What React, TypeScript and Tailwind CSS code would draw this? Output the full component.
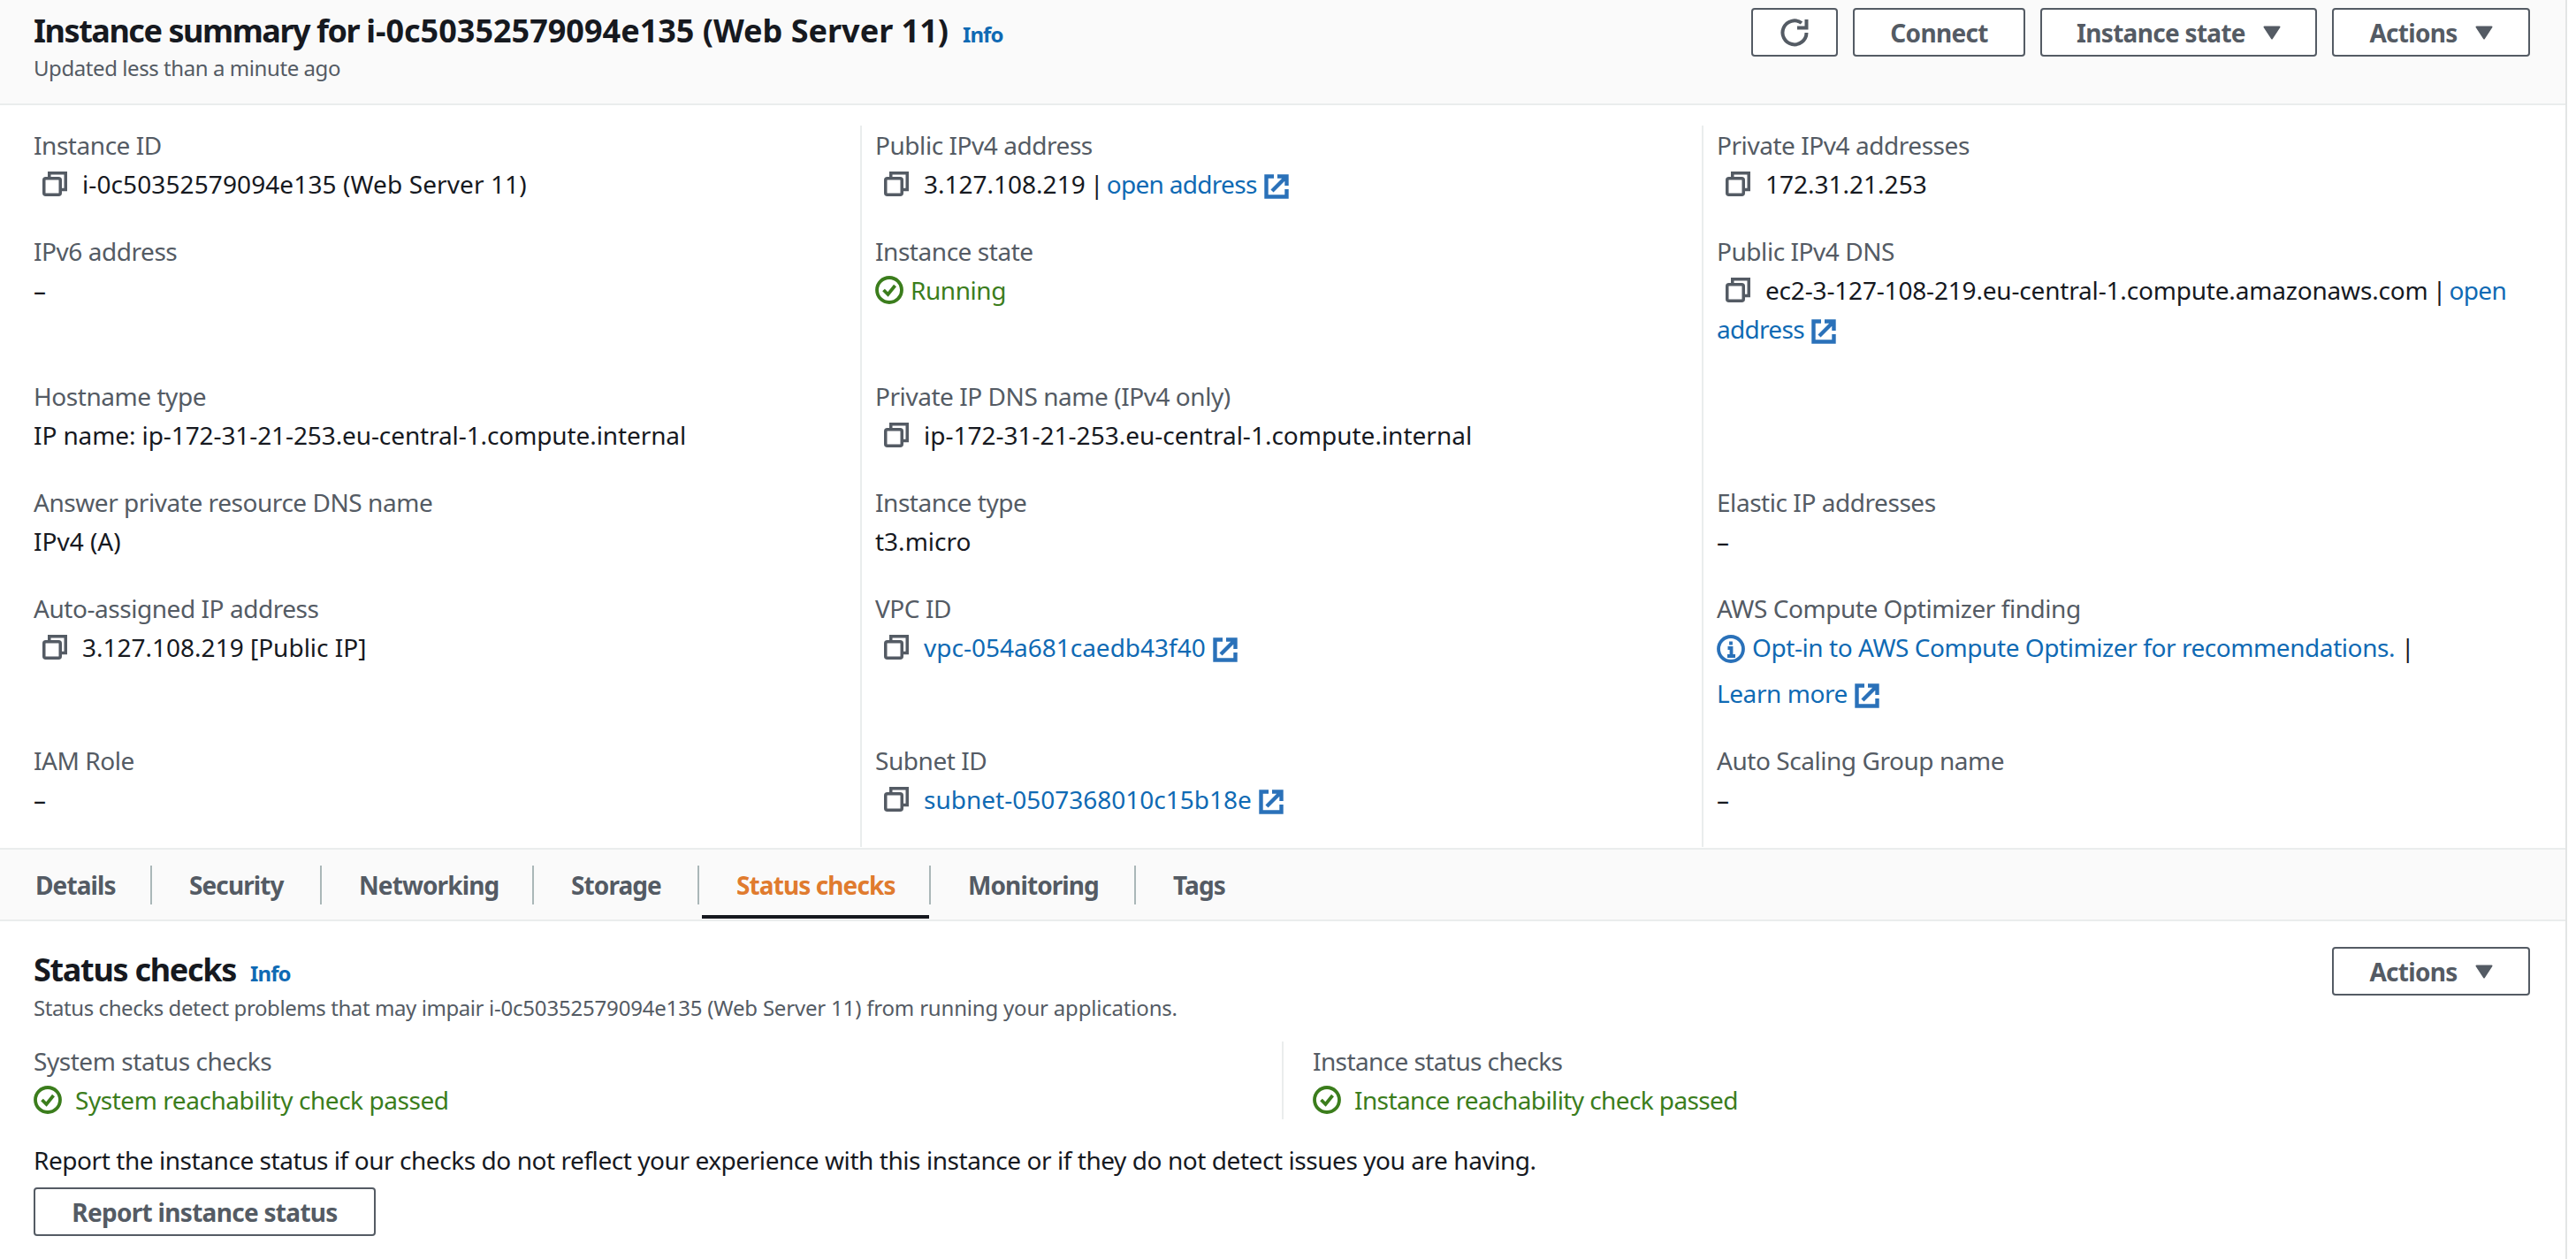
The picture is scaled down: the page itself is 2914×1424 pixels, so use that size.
import React from 'react';

const font = { fontFamily: '"Noto Sans", sans-serif' };

const CopyIcon = () => (
  <svg viewBox="0 0 28 28" className="w-[28px] h-[28px] shrink-0 mr-[17px] ml-[10px]" fill="none" stroke="#545b64" strokeWidth="3.5">
    <rect x="1.75" y="7.75" width="18.5" height="18.5" rx="2" />
    <path d="M7.75 6V1.75H26.25V20.5H22" />
  </svg>
);

const ExternalIcon = () => (
  <svg viewBox="0 0 28 28" className="inline-block w-[28px] h-[28px] ml-[8px] align-[-6px]" fill="none" stroke="#2a71b9" strokeWidth="4.4">
    <path d="M11 2.5H2.5v23h23V17" />
    <path d="M15 2.5h10.5V13M25 3 9 19" />
  </svg>
);

const CheckIcon = ({ className }: { className?: string }) => (
  <svg viewBox="0 0 32 32" className={className} fill="none" stroke="#3b7d1c" strokeWidth="3.8">
    <circle cx="16" cy="16" r="14" />
    <path d="M9.5 16l5 5 8-10" />
  </svg>
);

const InfoIcon = () => (
  <svg viewBox="0 0 32 32" className="inline-block w-[32px] h-[32px] mr-[8px] align-[-7px]" fill="none" stroke="#2a71b9" strokeWidth="3.8">
    <circle cx="16" cy="16" r="14" />
    <path d="M16 7.5v4M12.5 15H16.5V24M12 24h9" />
  </svg>
);

const Caret = () => (
  <svg viewBox="0 0 20 16" className="w-[20px] h-[16px] ml-[20px]" fill="#545b64" stroke="#545b64" strokeWidth="2" strokeLinejoin="round">
    <path d="M1.5 1.5h17L10 14.5z" />
  </svg>
);

const Button = ({ children, className }: { children: React.ReactNode; className: string }) => (
  <button className={`flex items-center justify-center h-[55px] rounded-[4px] border-2 border-[#545b64] bg-white text-[28px] font-bold tracking-[-0.7px] text-[#545b64] ${className}`}>
    {children}
  </button>
);

const Link = ({ children, className }: { children: React.ReactNode; className?: string }) => (
  <span className={`text-[#0f6ab4] ${className ?? ''}`}>{children}</span>
);

const Field = ({ label, children, border }: { label?: string; children?: React.ReactNode; border?: boolean }) => (
  <div className={`pb-[32px] pr-[20px] ${border ? 'border-l-2 border-[#eaeded] pl-[15px]' : 'pl-[17px]'}`}>
    {label && <div className="text-[#545b64] text-[28px] leading-[44px] tracking-[-0.45px]">{label}</div>}
    {children && <div className="text-[#16191f] text-[28px] leading-[44px]">{children}</div>}
  </div>
);

const Copy = ({ children }: { children: React.ReactNode }) => (
  <div className="flex items-center">
    <CopyIcon />
    <div>{children}</div>
  </div>
);

const tabs = [
  { name: 'Details', w: 'w-[172px]' },
  { name: 'Security', w: 'w-[192px]' },
  { name: 'Networking', w: 'w-[240px]' },
  { name: 'Storage', w: 'w-[187px]' },
  { name: 'Status checks', w: 'w-[262px]', active: true },
  { name: 'Monitoring', w: 'w-[232px]' },
  { name: 'Tags', w: 'w-[120px]' },
];

export default function App() {
  return (
    <div style={font} className="w-[2914px] h-[1424px] overflow-hidden bg-white">
      <div className="w-[2904px] h-full border-r-2 border-[#e3e5e5]">
        {/* Header */}
        <div className="h-[119px] bg-[#fafafa] border-b-2 border-[#eaeded] flex justify-between pl-[38px] pr-[40px] pt-[9px]">
          <div>
            <div className="flex items-baseline gap-[16px] pt-[1px]">
              <h1 className="text-[36px] leading-[50px] font-bold text-[#16191f]">
                <span className="tracking-[-1.45px]">Instance summary for </span>
                i-0c50352579094e135 (Web Server 11)
              </h1>
              <span className="text-[24px] font-bold tracking-[-0.9px] text-[#0f6ab4]">Info</span>
            </div>
            <div className="text-[24px] leading-[30px] tracking-[-0.43px] text-[#545b64] mt-[2px]">Updated less than a minute ago</div>
          </div>
          <div className="flex gap-[17px]">
            <Button className="w-[98px]">
              <svg viewBox="0 0 32 32" className="w-[32px] h-[32px]" fill="none" stroke="#545b64" strokeWidth="4">
                <path d="M29.5 16A13.5 13.5 0 1 1 24 5" />
                <path d="M29.5 1V10.5H19" />
              </svg>
            </Button>
            <Button className="w-[195px]">Connect</Button>
            <Button className="w-[313px]">
              Instance state
              <Caret />
            </Button>
            <Button className="w-[224px]">
              Actions
              <Caret />
            </Button>
          </div>
        </div>

        {/* Summary */}
        <div className="pl-[21px] h-[840px] pt-[23px] grid grid-cols-[952px_952px_977px] content-start">
          <Field label="Instance ID">
            <Copy><span className="tracking-[0.1px]">i-0c50352579094e135 (Web Server 11)</span></Copy>
          </Field>
          <Field label="Public IPv4 address" border>
            <Copy>
              3.127.108.219<span className="tracking-[-2px]"> | </span><Link className="tracking-[-0.7px]">open address<ExternalIcon /></Link>
            </Copy>
          </Field>
          <Field label="Private IPv4 addresses" border>
            <Copy>172.31.21.253</Copy>
          </Field>

          <Field label="IPv6 address">–</Field>
          <Field label="Instance state" border>
            <div className="flex items-center text-[#3b7d1c] tracking-[-0.45px]">
              <CheckIcon className="w-[32px] h-[32px] mr-[8px]" />
              Running
            </div>
          </Field>
          <Field label="Public IPv4 DNS" border>
            <div className="flex items-center tracking-[-0.18px]">
              <CopyIcon />
              <span>ec2-3-127-108-219.eu-central-1.compute.amazonaws.com<span className="tracking-[-2px]"> | </span><Link className="tracking-[-0.7px]">open</Link></span>
            </div>
            <div className="tracking-[-0.7px]"><Link>address<ExternalIcon /></Link></div>
          </Field>

          <Field label="Hostname type"><span className="tracking-[-0.1px]">IP name: ip-172-31-21-253.eu-central-1.compute.internal</span></Field>
          <Field label="Private IP DNS name (IPv4 only)" border>
            <Copy>ip-172-31-21-253.eu-central-1.compute.internal</Copy>
          </Field>
          <Field border />

          <Field label="Answer private resource DNS name">IPv4 (A)</Field>
          <Field label="Instance type" border>t3.micro</Field>
          <Field label="Elastic IP addresses" border>–</Field>

          <Field label="Auto-assigned IP address">
            <Copy>3.127.108.219 [Public IP]</Copy>
          </Field>
          <Field label="VPC ID" border>
            <Copy>
              <Link>vpc-054a681caedb43f40<ExternalIcon /></Link>
            </Copy>
          </Field>
          <Field label="AWS Compute Optimizer finding" border>
            <div className="leading-[52px] -mt-[4px] -mb-[4px] tracking-[-0.43px]">
              <Link><InfoIcon />Opt-in to AWS Compute Optimizer for recommendations.</Link> |<br />
              <Link>Learn more<ExternalIcon /></Link>
            </div>
          </Field>

          <Field label="IAM Role">–</Field>
          <Field label="Subnet ID" border>
            <Copy>
              <Link>subnet-0507368010c15b18e<ExternalIcon /></Link>
            </Copy>
          </Field>
          <Field label="Auto Scaling Group name" border>–</Field>
        </div>

        {/* Tabs */}
        <div className="h-[83px] bg-[#fafafa] border-y-2 border-[#eaeded] flex pt-[18px] relative">
          {tabs.map((t, i) => (
            <div
              key={t.name}
              className={`h-[44px] flex items-center text-[28px] font-bold tracking-[-0.9px] ${t.w} ${i === 0 ? 'pl-[40px]' : 'pl-[42px]'} ${i < tabs.length - 1 ? 'border-r-2 border-[#aab7b8]' : ''} ${t.active ? 'text-[#e07b2e] relative' : 'text-[#545b64]'}`}
            >
              {t.name}
              {t.active && <div className="absolute left-[3px] right-0 -bottom-[16px] h-[4px] bg-[#16191f]" />}
            </div>
          ))}
        </div>

        {/* Status checks */}
        <div className="pl-[38px] pr-[40px] pt-[30px]">
          <div className="flex justify-between">
            <div>
              <div className="flex items-baseline gap-[16px]">
                <h2 className="text-[36px] leading-[50px] font-bold tracking-[-1.3px] text-[#16191f]">Status checks</h2>
                <span className="text-[24px] font-bold tracking-[-0.9px] text-[#0f6ab4]">Info</span>
              </div>
              <div className="text-[24px] leading-[34px] tracking-[-0.19px] text-[#545b64] mt-[1px]">
                <span className="tracking-[-0.42px]">Status checks detect problems that may impair </span>
                i-0c50352579094e135 (Web Server 11) from running your applications.
              </div>
            </div>
            <Button className="w-[224px] -mt-[1px]">
              Actions
              <Caret />
            </Button>
          </div>
          <div className="flex mt-[21px]">
            <div className="w-[1412px] tracking-[-0.45px]">
              <div className="text-[28px] leading-[44px] text-[#545b64]">System status checks</div>
              <div className="flex items-center text-[28px] leading-[44px] text-[#3b7d1c]">
                <CheckIcon className="w-[32px] h-[32px] mr-[15px]" />
                System reachability check passed
              </div>
            </div>
            <div className="pl-[33px] border-l-2 border-[#eaeded] tracking-[-0.6px]">
              <div className="text-[28px] leading-[44px] text-[#545b64]">Instance status checks</div>
              <div className="flex items-center text-[28px] leading-[44px] text-[#3b7d1c]">
                <CheckIcon className="w-[32px] h-[32px] mr-[15px]" />
                Instance reachability check passed
              </div>
            </div>
          </div>
          <div className="text-[28px] leading-[44px] tracking-[-0.44px] text-[#16191f] mt-[24px]">
            Report the instance status if our checks do not reflect your experience with this instance or if they do not detect issues you are having.
          </div>
          <Button className="w-[387px] mt-[9px]">Report instance status</Button>
        </div>
      </div>
    </div>
  );
}
